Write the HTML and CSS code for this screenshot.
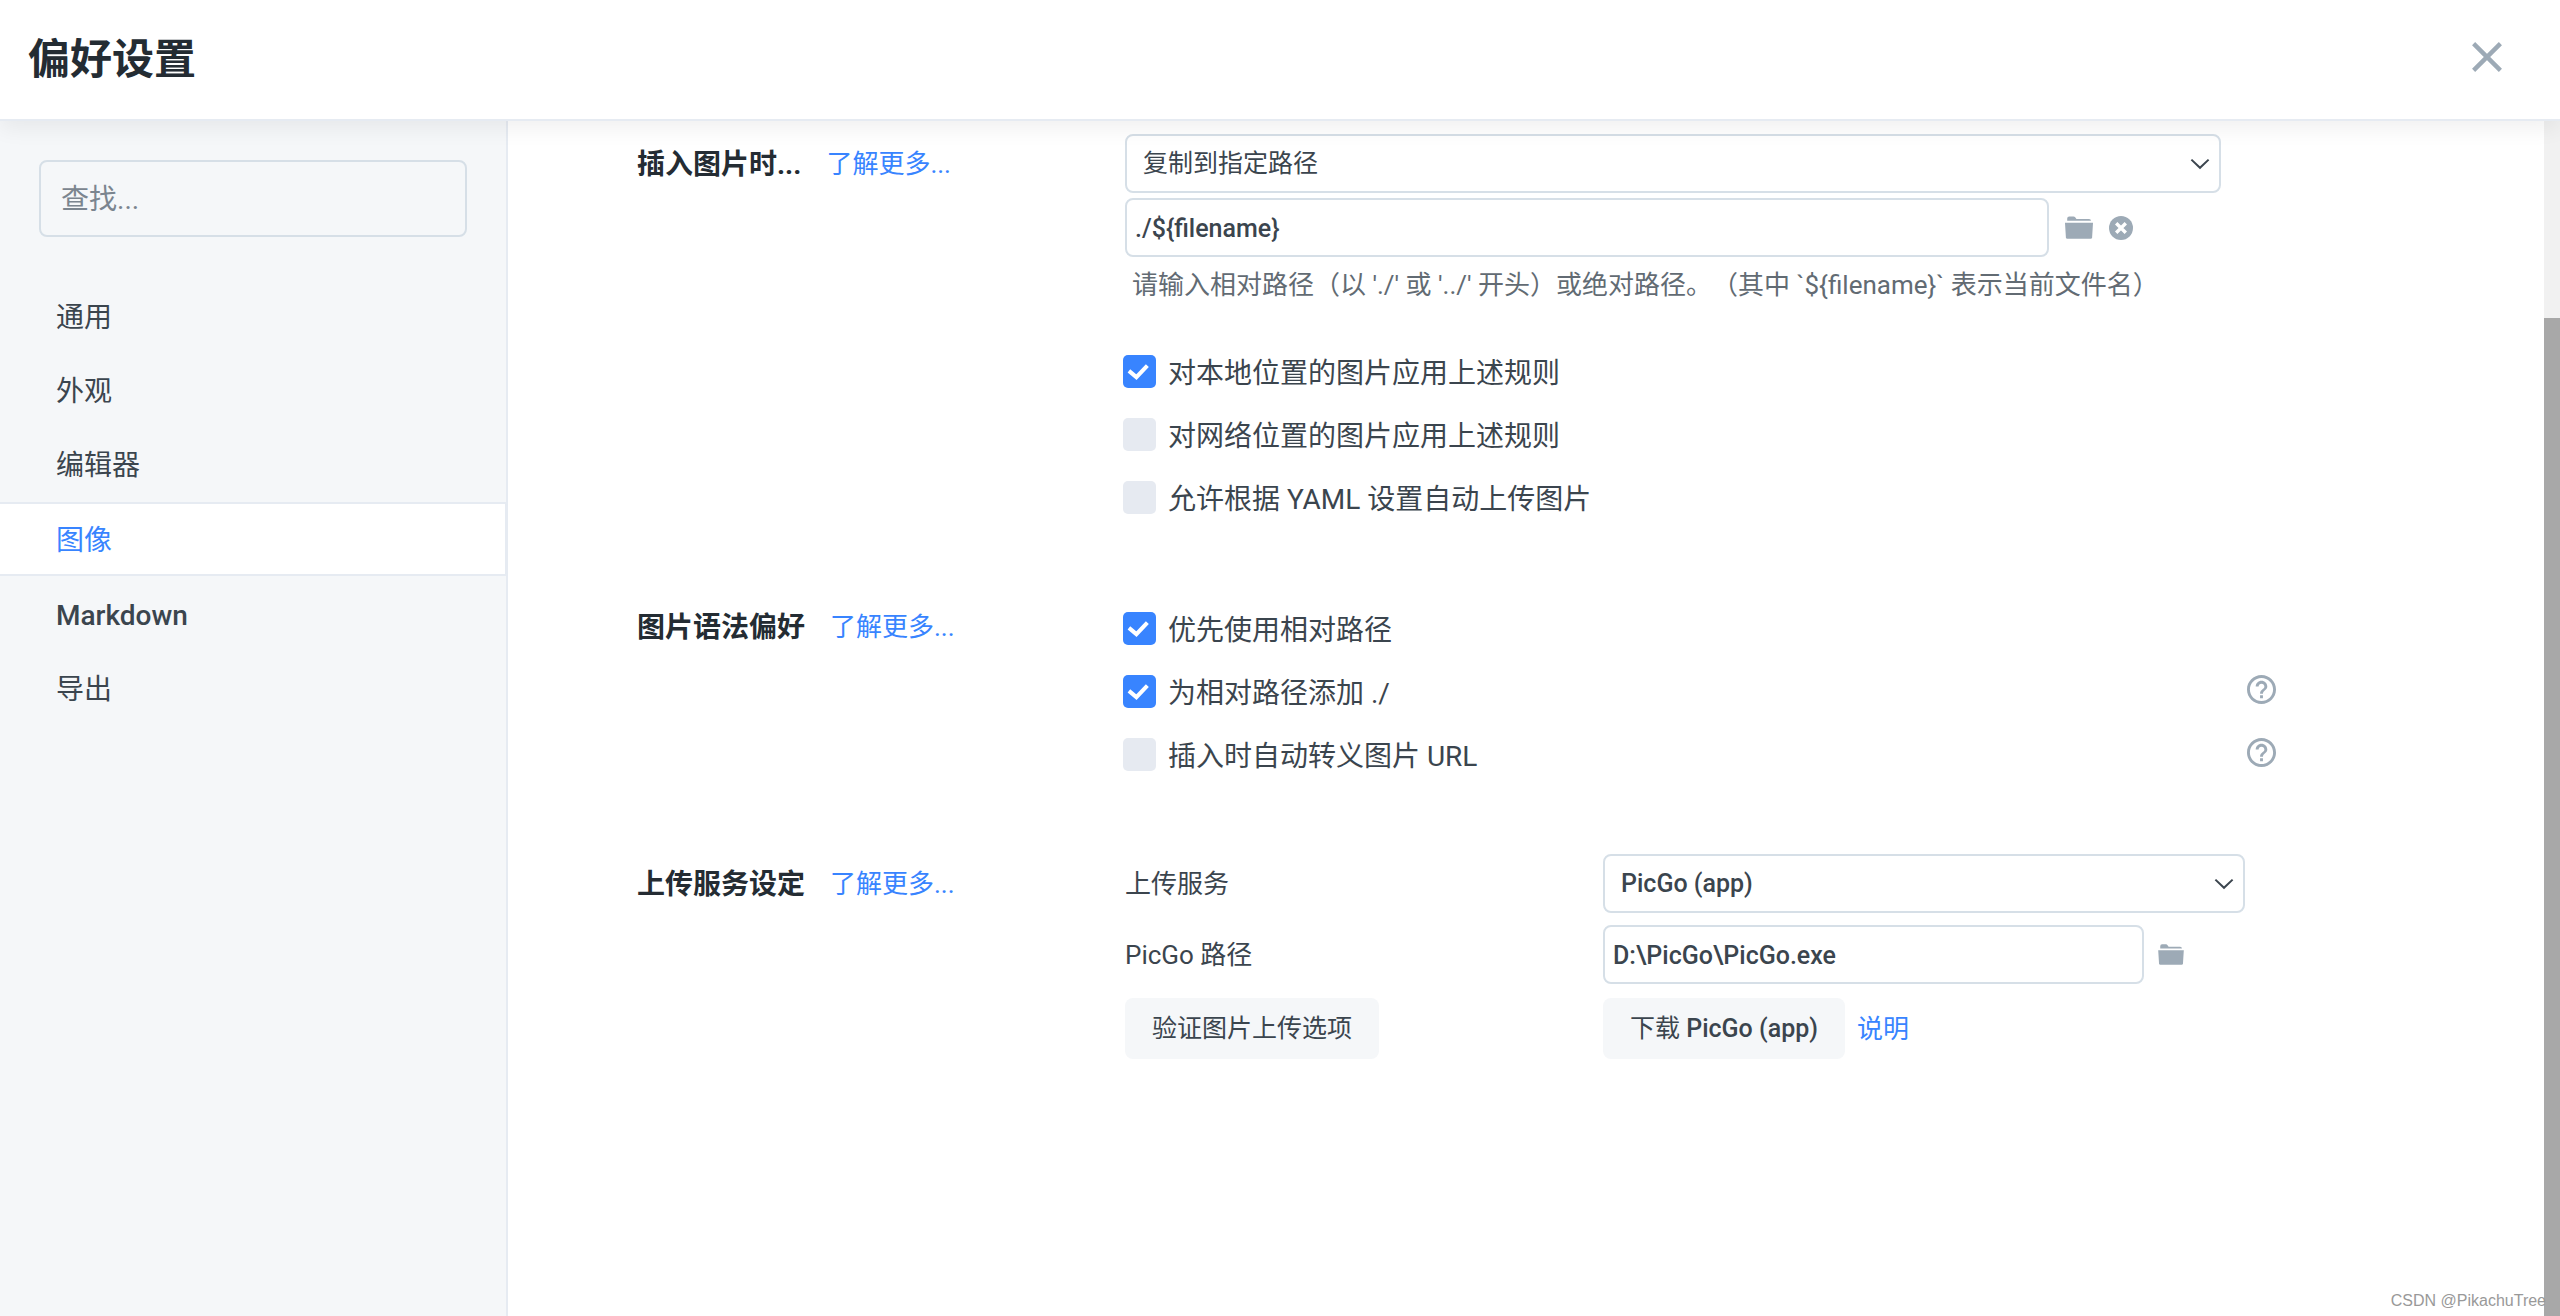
FILE: index.html
```html
<!DOCTYPE html>
<html lang="zh-CN">
<head>
<meta charset="utf-8">
<title>偏好设置</title>
<link rel="stylesheet" href="styles.css">
</head>
<body>
<svg class="sprite" aria-hidden="true">
  <symbol id="folder" viewBox="0 0 28 23">
    <path d="M2.2 4.8V2.4Q2.2 0.4 4.2 0.4H8.4Q9.6 0.4 10.4 1.6L11.4 3H24Q26 3 26 4.8Z"/>
    <path d="M0 6.8H28L27.1 21.4Q27 22.8 25.6 22.8H2.4Q1 22.8 0.9 21.4Z"/>
  </symbol>
  <symbol id="clear" viewBox="0 0 24 24">
    <circle cx="12" cy="12" r="12"/>
    <path d="M7.2 7.2L16.8 16.8M16.8 7.2L7.2 16.8" stroke="#fff" stroke-width="3.4"/>
  </symbol>
  <symbol id="chevron" viewBox="0 0 20 12">
    <path d="M1.4 1.6L10 9.8L18.6 1.6" fill="none" stroke="#3b454e" stroke-width="2"/>
  </symbol>
  <symbol id="check" viewBox="0 0 33 34">
    <path d="M5.6 16.4L13.3 22.8L24.6 11" fill="none" stroke="#fff" stroke-width="4.2"/>
  </symbol>
  <symbol id="help" viewBox="2 2 20 20">
    <path d="M11 18h2v-2h-2v2zm1-16C6.480 2 2 6.480 2 12s4.480 10 10 10 10-4.480 10-10S17.520 2 12 2zm0 18c-4.410 0-8-3.590-8-8s3.590-8 8-8 8 3.590 8 8-3.590 8-8 8zm0-14c-2.210 0-4 1.790-4 4h2c0-1.100.9-2 2-2s2 .9 2 2c0 2-3 1.750-3 5h2c0-2.250 3-2.500 3-5 0-2.210-1.790-4-4-4z"/>
  </symbol>
</svg>

<header class="topbar">
  <h1>偏好设置</h1>
  <button class="close" aria-label="关闭">
    <svg viewBox="0 0 30 30"><path d="M1.600 1.600L28.400 28.400M28.400 1.600L1.600 28.400" fill="none" stroke="#9daab6" stroke-width="4.400"/></svg>
  </button>
</header>

<div class="body">
  <aside class="sidebar">
    <input class="search" type="search" placeholder="查找..." aria-label="查找">
    <nav class="nav">
      <a href="#general">通用</a>
      <a href="#appearance">外观</a>
      <a href="#editor">编辑器</a>
      <a href="#image" class="active" aria-current="page">图像</a>
      <a href="#markdown" class="latin">Markdown</a>
      <a href="#export">导出</a>
    </nav>
  </aside>

  <main class="content">
    <section class="group">
      <div class="head"><h2>插入图片时...</h2><a href="#insert">了解更多...</a></div>
      <div class="controls">
        <div class="select main-select">
          <select aria-label="插入图片时"><option>复制到指定路径</option></select>
          <svg class="chevron"><use href="#chevron"/></svg>
        </div>
        <div class="path-row main-path">
          <input class="field" type="text" value="./${filename}" aria-label="路径">
          <button class="icon folder" aria-label="选择文件夹"><svg><use href="#folder"/></svg></button>
          <button class="icon clear" aria-label="清除"><svg><use href="#clear"/></svg></button>
        </div>
        <p class="hint">请输入相对路径（以 './' 或 '../' 开头）或绝对路径。（其中 `${filename}` 表示当前文件名）</p>
        <div class="checks">
          <label class="check"><span class="box"><input type="checkbox" checked><svg><use href="#check"/></svg></span>对本地位置的图片应用上述规则</label>
          <label class="check"><span class="box"><input type="checkbox"><svg><use href="#check"/></svg></span>对网络位置的图片应用上述规则</label>
          <label class="check"><span class="box"><input type="checkbox"><svg><use href="#check"/></svg></span>允许根据 YAML 设置自动上传图片</label>
        </div>
      </div>
    </section>

    <section class="group">
      <div class="head"><h2>图片语法偏好</h2><a href="#syntax">了解更多...</a></div>
      <div class="controls checks only-checks">
        <div class="check-row">
          <label class="check"><span class="box"><input type="checkbox" checked><svg><use href="#check"/></svg></span>优先使用相对路径</label>
        </div>
        <div class="check-row">
          <label class="check"><span class="box"><input type="checkbox" checked><svg><use href="#check"/></svg></span>为相对路径添加 ./</label>
          <button class="icon help" aria-label="帮助"><svg><use href="#help"/></svg></button>
        </div>
        <div class="check-row">
          <label class="check"><span class="box"><input type="checkbox"><svg><use href="#check"/></svg></span>插入时自动转义图片 URL</label>
          <button class="icon help" aria-label="帮助"><svg><use href="#help"/></svg></button>
        </div>
      </div>
    </section>

    <section class="group">
      <div class="head"><h2>上传服务设定</h2><a href="#upload">了解更多...</a></div>
      <div class="controls upload">
        <label for="service">上传服务</label>
        <div class="select service-select">
          <select id="service" class="latin"><option>PicGo (app)</option></select>
          <svg class="chevron"><use href="#chevron"/></svg>
        </div>
        <label for="picgo">PicGo 路径</label>
        <div class="path-row service-path">
          <input id="picgo" class="field" type="text" value="D:\PicGo\PicGo.exe">
          <button class="icon folder small" aria-label="选择文件"><svg><use href="#folder"/></svg></button>
        </div>
        <div class="actions"><button class="btn">验证图片上传选项</button></div>
        <div class="actions"><button class="btn">下载 <span class="latin">PicGo (app)</span></button><a href="#docs">说明</a></div>
      </div>
    </section>
  </main>

  <div class="scrollbar"><div class="thumb"></div></div>
</div>
<div class="watermark">CSDN @PikachuTree</div>
</body>
</html>
```
FILE: styles.css
```css
* { box-sizing: border-box; }

html, body { height: 100%; }

body {
  margin: 0;
  display: flex;
  flex-direction: column;
  overflow: hidden;
  background: #fff;
  color: #3b454e;
  font-family: Roboto, "Noto Sans CJK SC", sans-serif;
  font-size: 26px;
  line-height: 36px;
  text-spacing-trim: space-all;
}

input, select, button { font: inherit; color: inherit; margin: 0; }
button { border: 0; padding: 0; background: none; cursor: pointer; }
a { color: #3884ff; text-decoration: none; }
svg { display: block; }
.sprite { position: absolute; width: 0; height: 0; }
.latin { font-weight: 500; }

.topbar {
  position: relative;
  z-index: 1;
  flex: none;
  display: flex;
  align-items: center;
  justify-content: space-between;
  height: 121px;
  padding: 0 58px 5px 28px;
  border-bottom: 2px solid #e6ebf2;
  background: #fff;
  box-shadow: 0 8px 20px rgba(0, 0, 0, 0.06);
}
.topbar h1 {
  margin: 0;
  padding-top: 6px;
  font-size: 42px;
  line-height: 60px;
  font-weight: 700;
  color: #242c33;
}
.close svg { width: 30px; height: 30px; }

.body { flex: 1; min-height: 0; display: flex; }

.sidebar {
  flex: none;
  width: 508px;
  padding-top: 39px;
  border-right: 2px solid #e6ebf2;
  background: #f5f7f9;
  font-size: 28px;
}
.search {
  display: block;
  width: 428px;
  height: 77px;
  margin: 0 39px 42px;
  padding: 2px 20px 0;
  border: 2px solid #d6dfe7;
  border-radius: 8px;
  background: transparent;
  appearance: none;
}
.search::placeholder { color: #7b858f; opacity: 1; }
.nav { display: flex; flex-direction: column; }
.nav a {
  height: 74px;
  padding: 2px 0 0 56px;
  line-height: 74px;
  color: #3b454e;
}
.nav .active {
  margin: 1px 0;
  border: solid #e6ebf2;
  border-width: 2px 1px 2px 0;
  background: #fff;
  color: #3884ff;
  line-height: 70px;
}

.content {
  flex: 1;
  min-width: 0;
  display: flex;
  flex-direction: column;
  gap: 82px;
  padding: 13px 268px 0 129px;
}
.group {
  display: grid;
  grid-template-columns: 488px minmax(0, 1fr);
  align-items: start;
}
.head { display: flex; align-items: center; gap: 25px; height: 59px; }
.head h2 { margin: 0; padding-top: 2px; font-size: 28px; font-weight: 700; color: #242c33; }

.select { display: grid; align-items: center; }
.select > * { grid-area: 1 / 1; }
.select select {
  width: 100%;
  height: 59px;
  padding: 0 16px;
  border: 2px solid #d6dfe7;
  border-radius: 8px;
  background: #fff;
  font-size: 25px;
  appearance: none;
}
.chevron {
  width: 20px;
  height: 12px;
  margin-right: 11px;
  justify-self: end;
  pointer-events: none;
}
.main-select { margin: 0 55px 5px 0; }
.service-select { margin-right: 31px; }

.path-row { display: flex; align-items: center; gap: 16px; }
.main-path { margin-right: 143px; }
.service-path { gap: 14px; margin-right: 92px; }
.field {
  flex: 1;
  min-width: 0;
  height: 59px;
  padding: 1px 8px 0;
  border: 2px solid #d6dfe7;
  border-radius: 8px;
  background: #fff;
  font-size: 25px;
  font-weight: 500;
}
.icon { flex: none; fill: #9daab6; }
.icon svg { width: 100%; height: 100%; }
.folder { width: 28px; height: 23px; }
.folder.small { width: 26px; height: 21px; }
.clear { width: 24px; height: 24px; }
.help { width: 29px; height: 29px; }

.hint { margin: 10px 0 52px 7px; color: #626b73; }

.checks { display: flex; flex-direction: column; gap: 29px; }
.only-checks { padding-top: 15px; }
.check-row { display: flex; justify-content: space-between; }
.check {
  display: flex;
  align-items: flex-start;
  gap: 12px;
  height: 34px;
  margin-left: -2px;
  font-size: 28px;
  line-height: 38px;
}
.box { display: grid; }
.box > * { grid-area: 1 / 1; width: 33px; height: 33px; }
.box input { appearance: none; border-radius: 5px; background: #e6eaf1; }
.box input:checked { background: #3884ff; }
.box svg { visibility: hidden; pointer-events: none; }
.box input:checked + svg { visibility: visible; }

.upload {
  display: grid;
  grid-template-columns: 478px minmax(0, 1fr);
  align-items: center;
  row-gap: 12px;
}
.actions { display: flex; align-items: center; gap: 12px; padding-top: 2px; }
.btn {
  height: 61px;
  padding: 0 27px;
  border-radius: 8px;
  background: #f5f7f9;
  font-size: 25px;
}

.scrollbar {
  flex: none;
  display: flex;
  width: 16px;
  padding-top: 197px;
  background: #f1f1f1;
}
.thumb { flex: 1; background: #a8a8a8; }

.watermark {
  position: absolute;
  z-index: 2;
  right: 14px;
  bottom: 5px;
  color: #999;
  font: 16px/20px "Liberation Sans", sans-serif;
}
```
